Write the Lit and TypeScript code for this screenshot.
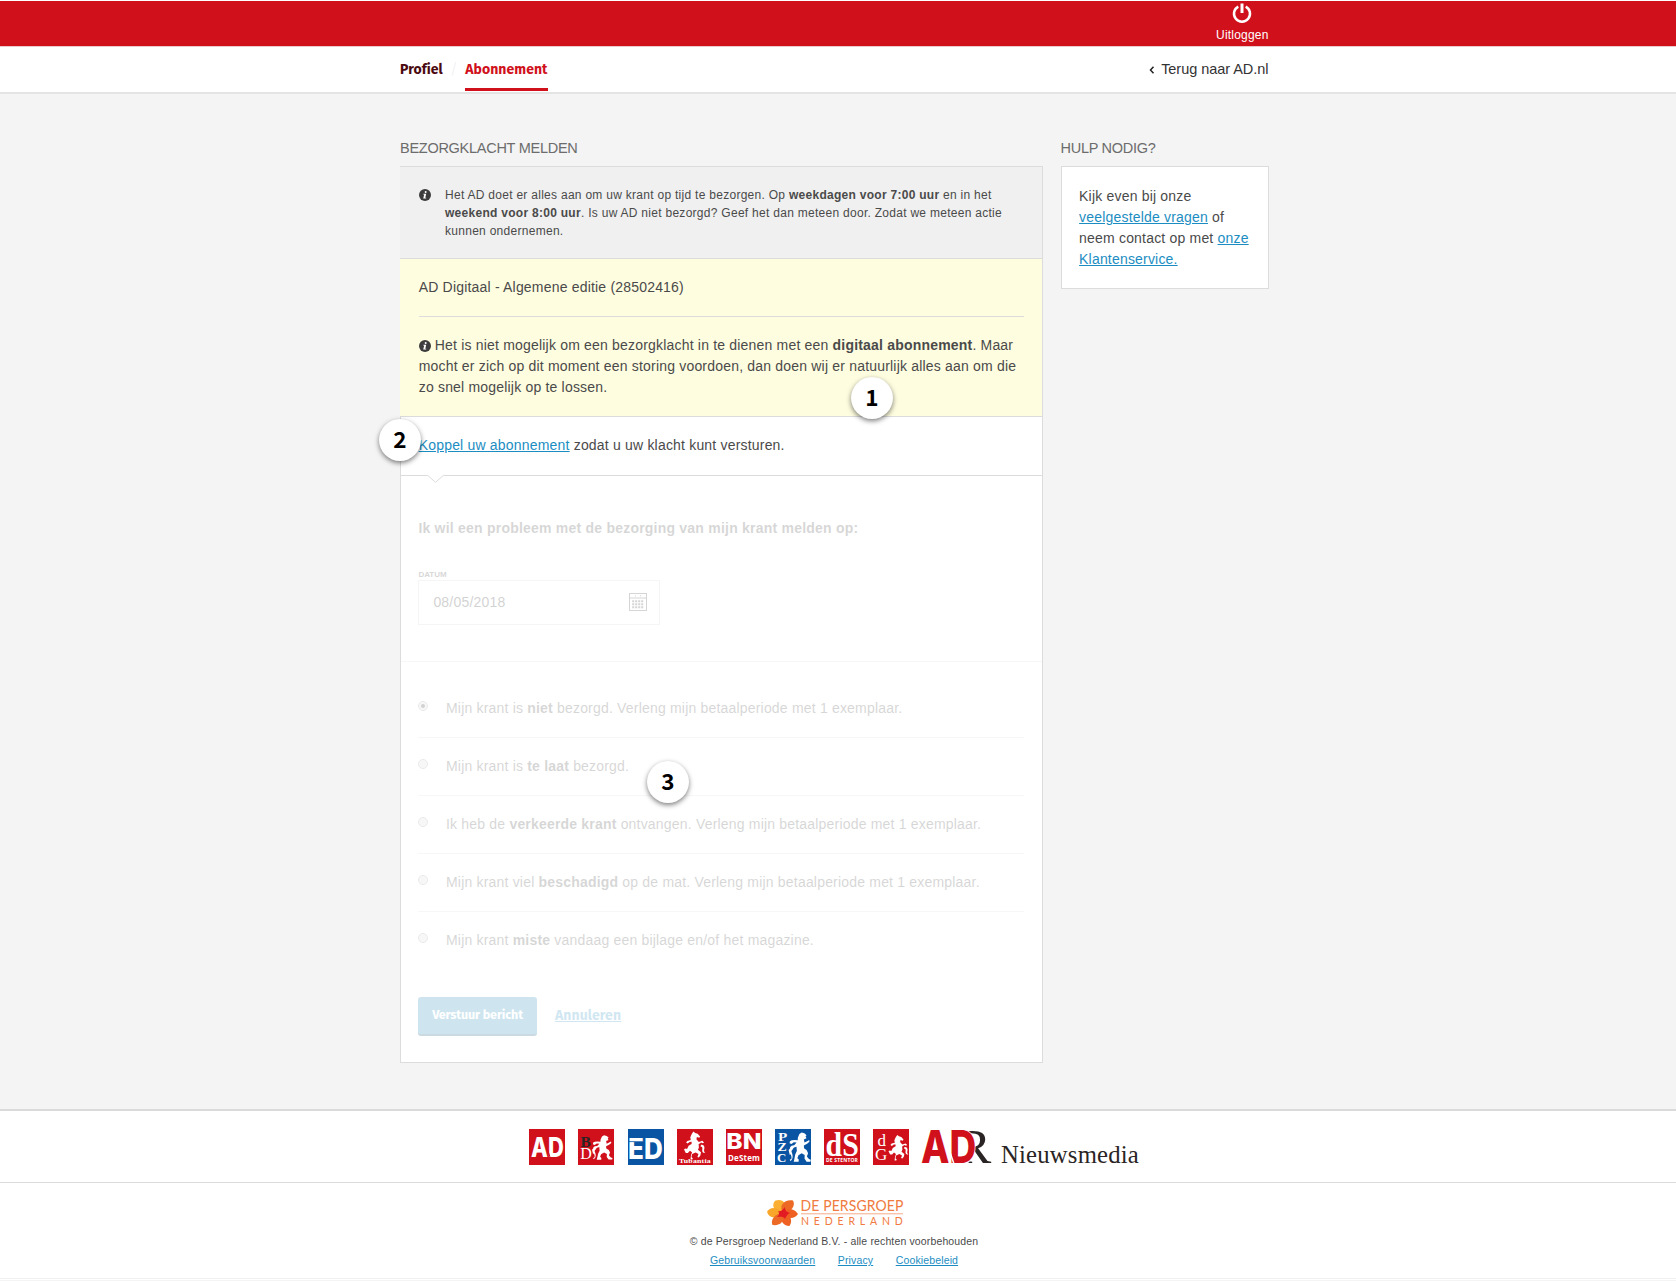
import { LitElement, html, svg, css } from 'lit';
import { customElement, state } from 'lit/decorators.js';

const lion = svg`
  <path d="M11.5 1.2 13.5 0l2.6.6 2 1.6-.9.9.8 1.7-2.4 1 .6 2.6 2.9-1.4 1.4-.8.3 1.6-2.2 1.6-3 1.5.2 2.2 2.5 1.6 1.2 2.6-1.1 2.6 1.9 2.2 1.7.6-.3 1.6h-3.6l-1.9-2.6.2-3-2.8-1.4-3 1.6-1 2.5 1.3 1.2-.2 1.8H6.2l.5-1.6.9-4.4 1.5-3-.3-3.6-2.3.7-1.8 1.9-1.6-.4-.3-1.7 1.5-1.3 2.4-.4 2.2-2.2-2.6-.3-2.2 1.5-1.7-.7.3-1.7 1.7-.8 2.700-.1 2.800.2.2-2.400z"/>
  <path d="M2.600 22.600c2.600.1 1.500-3 .6-4.800-.9-2-.1-3.900 1.300-4.700-.5 1.500-.6 2.500.1 4 .9 2.200 1.200 5.600-1.700 6.700z"/>
  <path d="M1.500 14.500 4 12l1.500 1.500L3.500 16l1 2-2 .5z"/>`;

const horse = svg`
  <path d="M9 0l1.600 1.300L13 2l2.300 2.600-.8 1.200-2.200-.6-.5 2 2.300 2.600 3.300-1.200 1.700 1.500-1.300.8-1.500-.6-2.400 1.500.3 3-.9 2.200 2.900 2.300-.6 3-1.500 1.700-1.300-.5 1-2.700-2.700-1.300-3.300 1.400-.7 2.800 1.300 1.300-.5 1H6.200l.4-3.500 1-3.200-2-1.500-1.900 2-2 .1L0 16.600l1.300-.8 1.600.5 1.500-3 2.800-1.700.1-2-2 .2-1.800 1.300-1.500-.8 1.200-1.600 3.200-.8L6 5.400l1.500-3.300z"/>
  <path d="M16.300 12.300c2.400-.3 3.700 1.700 3 4-.5 1.700-.2 2.600 1 3.300-2 .7-3.300-.7-2.900-2.800.4-1.900-.1-3-1.700-3z"/>`;

const infoIcon = html`
  <svg class="info-icon" viewBox="0 0 12 12" aria-hidden="true">
    <circle cx="6" cy="6" r="6" />
    <circle class="cut" cx="6.700" cy="2.900" r="1" />
    <path class="cut" d="M4.300 4.700h2.900L6.300 8.700h.9v.8H4.200l1-4H4.300z" />
  </svg>`;

const options = [
  ['Mijn krant is ', 'niet', ' bezorgd. Verleng mijn betaalperiode met 1 exemplaar.'],
  ['Mijn krant is ', 'te laat', ' bezorgd.'],
  ['Ik heb de ', 'verkeerde krant', ' ontvangen. Verleng mijn betaalperiode met 1 exemplaar.'],
  ['Mijn krant viel ', 'beschadigd', ' op de mat. Verleng mijn betaalperiode met 1 exemplaar.'],
  ['Mijn krant ', 'miste', ' vandaag een bijlage en/of het magazine.'],
];

@customElement('brand-logos')
class BrandLogos extends LitElement {
  static styles = css`
    :host { display: flex; align-items: flex-start; }
    svg { display: block; flex: none; overflow: visible; }
    .tile { width: 36px; height: 36px; margin-right: 13.100px; }
    .red { fill: #d0111c; }
    .blue { fill: #0a55a3; }
    .w { fill: #fff; }
    .k { fill: #2a2424; }
    .heavy { font-family: Inter, "Liberation Sans", sans-serif; font-weight: 800; }
    .sans { font-family: "Open Sans", sans-serif; font-weight: 700; }
    .serif { font-family: "Liberation Serif", serif; }
    .bold { font-weight: 700; }
    .halo { stroke: #fff; stroke-width: 1.500; paint-order: stroke; }
    .cutline { stroke: #d0111c; stroke-width: 1; }
    .adr { width: 72px; height: 36px; margin-left: 0; }
    .adr .cutline { stroke: #fff; stroke-width: 1.500; }
    .media { width: 140px; height: 40px; margin-left: 6px; }
  `;
  render() {
    return html`
      <svg class="tile" viewBox="0 0 36 36"><rect class="red" width="36" height="36"/>
        <text class="w heavy" x="2" y="27.700" font-size="26.500" textLength="33" lengthAdjust="spacingAndGlyphs">AD</text>
        <path class="cutline" d="M14.500 8 21 28"/></svg>
      <svg class="tile" viewBox="0 0 36 36"><rect class="red" width="36" height="36"/>
        <text class="k serif bold" x="2.500" y="18" font-size="15.500">B</text>
        <text class="w serif" x="2.200" y="30" font-size="16">D</text>
        <g class="w" transform="translate(12.500 6.300)">${lion}</g></svg>
      <svg class="tile" viewBox="0 0 36 36"><rect class="blue" width="36" height="36"/>
        <text class="w heavy" x="0" y="29.500" font-size="28.500" textLength="35" lengthAdjust="spacingAndGlyphs">ED</text>
        <path d="M1 12.600h14" stroke="#0a55a3" stroke-width=".8"/></svg>
      <svg class="tile" viewBox="0 0 36 36"><rect class="red" width="36" height="36"/>
        <g class="w" transform="translate(7 2.500) scale(1.050 1.080)">${horse}</g>
        <text class="w serif bold" x="2" y="33.700" font-size="7" textLength="32" lengthAdjust="spacingAndGlyphs">Tubantia</text></svg>
      <svg class="tile" viewBox="0 0 36 36"><rect class="red" width="36" height="36"/>
        <text class="w heavy" x=".3" y="20.300" font-size="21.500" textLength="35.500" lengthAdjust="spacingAndGlyphs">BN</text>
        <text class="w sans" x="2" y="31.800" font-size="8.700" textLength="32" lengthAdjust="spacingAndGlyphs">DeStem</text></svg>
      <svg class="tile" viewBox="0 0 36 36"><rect class="blue" width="36" height="36"/>
        <text class="w serif bold" x="3" y="11.500" font-size="12" textLength="9.500" lengthAdjust="spacingAndGlyphs">P</text>
        <text class="w serif bold" x="2.500" y="22.300" font-size="12" textLength="9.500" lengthAdjust="spacingAndGlyphs">Z</text>
        <text class="w serif bold" x="2" y="33.300" font-size="12" textLength="9.500" lengthAdjust="spacingAndGlyphs">C</text>
        <g class="w" transform="translate(12 3.500) scale(1.080 1.200)">${lion}</g></svg>
      <svg class="tile" viewBox="0 0 36 36"><rect class="red" width="36" height="36"/>
        <text class="w serif bold" x="1.500" y="26.500" font-size="33" textLength="33.500" lengthAdjust="spacingAndGlyphs">dS</text>
        <text class="w sans" x="2" y="33" font-size="5.500" textLength="32" lengthAdjust="spacingAndGlyphs">DE STENTOR</text></svg>
      <svg class="tile" viewBox="0 0 36 36"><rect class="red" width="36" height="36"/>
        <text class="w serif" x="4.500" y="17" font-size="17">d</text>
        <text class="w serif" x="2" y="31.300" font-size="17">G</text>
        <g class="w" transform="translate(15.500 6) scale(.98)">${horse}</g></svg>
      <svg class="adr" viewBox="0 0 72 36">
        <text class="k serif" x="34" y="34.300" font-size="49" textLength="35.500" lengthAdjust="spacingAndGlyphs">R</text>
        <path class="w" d="M30 0H43Q50 4 50 18T45 35H30z"/>
        <text class="red heavy halo" x="-1" y="34.300" font-size="45" textLength="55.500" lengthAdjust="spacingAndGlyphs">AD</text>
        <path class="cutline" d="M20.500 1 32 35"/></svg>
      <svg class="media" viewBox="0 0 140 40">
        <text class="k serif" x="1" y="34.400" font-size="25" textLength="138" lengthAdjust="spacingAndGlyphs">Nieuwsmedia</text></svg>`;
  }
}

@customElement('app-root')
class AppRoot extends LitElement {
  @state() private selected = 0;

  static styles = css`
    :host {
      display: block; position: relative; height: 1281px; box-sizing: border-box; overflow: hidden;
      background: #f4f4f4; color: #4a4a4a;
      font: 14px/21px "Liberation Sans", Arial, sans-serif; letter-spacing: .191px;
    }
    * { box-sizing: border-box; }
    p, h1, h2 { margin: 0; font: inherit; }
    a { color: #1c8dc2; text-decoration: underline; text-underline-offset: 1px; }
    .wrap { width: 868.500px; margin: 0 auto 0 400px; display: flex; justify-content: space-between; }
    .topbar { height: 46px; background: #d0111c; border-top: 1px solid #fff; }
    .topbar .wrap { justify-content: flex-end; }
    .logout { display: flex; flex-direction: column; align-items: center; color: #fff; font-size: 12px; line-height: 14px; padding-top: 2px; gap: 5px; }
    .logout svg { width: 20px; height: 20px; }
    nav { height: 48px; background: #fff; border-top: 1px solid #ecc9cb; border-bottom: 2px solid #e4e4e4; }
    .tabs { display: flex; font: bold 14px/21px "Fira Sans", Roboto, sans-serif; letter-spacing: .060px; height: 44px; }
    .tab { padding-top: 12px; color: #4a0a10; text-decoration: none; }
    .tab.on { color: #d0111c; border-bottom: 3px solid #d0111c; }
    .slash { width: 22.500px; padding-top: 12px; text-align: center; color: #eee; font-weight: 300; }
    .back { display: flex; align-items: center; gap: 6px; height: 45px; font-size: 14.500px; letter-spacing: -.040px; color: #333; text-decoration: none; }
    .back svg { width: 6px; height: 8px; margin-top: 1px; }
    .cols { padding-top: 44px; align-items: flex-start; }
    h1, h2 { font-size: 14.500px; line-height: 21px; letter-spacing: -.270px; color: #6c6c6c; padding-bottom: 7px; }
    .main { width: 643px; }
    .side { width: 208px; }
    .panel { border: 1px solid #dcdcdc; background: #fff; height: 897px; }
    .intro { display: flex; gap: 14px; height: 92px; padding: 19px 20px 0 19px; margin-left: -1px; background: #f0f0f0; border-bottom: 1px solid #dcdcdc; font-size: 12px; line-height: 18px; letter-spacing: .280px; }
    .intro p { width: 565px; }
    .info-icon { width: 12px; height: 12px; flex: none; fill: #3d3d3d; }
    .info-icon .cut { fill: #fff; }
    .intro .info-icon { margin-top: 3px; }
    .notice { height: 158px; margin-left: -1px; padding: 18px 18px 0 18.700px; background: #fefde0; border-bottom: 1px solid #dcdcdc; }
    .notice .sub { height: 40px; border-bottom: 1px solid #dcdcdc; }
    .notice .text { padding-top: 18px; white-space: nowrap; }
    .notice .info-icon { vertical-align: -2px; }
    .link { position: relative; height: 59px; padding: 18px 17.700px; border-bottom: 1px solid #dcdcdc; }
    .notch { position: absolute; left: 26px; top: 57px; width: 17px; height: 9px; }
    .form { opacity: .2; color: #3a3a3a; }
    .date { height: 186px; padding: 42px 17.400px 0; border-bottom: 1px solid #d8d8d8; }
    .date h2 { font: bold 14px/21px "Liberation Sans", Arial, sans-serif; letter-spacing: .220px; color: inherit; padding: 0; }
    .label { display: block; font-weight: bold; font-size: 8px; line-height: 10px; letter-spacing: 0; margin-top: 31px; }
    .field { display: flex; align-items: center; justify-content: space-between; width: 242px; height: 45px; padding: 0 12px 1px 14px; border: 1px solid #d0d0d0; color: #222; }
    .field svg { width: 18px; height: 18px; margin-top: -1px; }
    .opts { padding: 18px 18px 0 17px; }
    .opt { display: flex; height: 57.950px; padding-top: 18px; border-bottom: 1px solid #d8d8d8; }
    .opt:last-child { border-bottom: 0; }
    .radio { width: 10px; height: 10px; margin: 3px 18px 0 0; border: 1px solid #999; border-radius: 50%; background: #dcdcdc; flex: none; display: grid; place-items: center; }
    .radio.on::after { content: ""; width: 4px; height: 4px; border-radius: 50%; background: #222; }
    .actions { display: flex; align-items: flex-start; gap: 18px; padding: 27px 17px 0; font-family: "Fira Sans", Roboto, sans-serif; font-weight: bold; }
    .send { width: 119px; height: 39px; border: 0; border-bottom: 2px solid #00456e; border-radius: 3px; background: #0e80b5; color: #fff; font: bold 12.500px/18px "Fira Sans", Roboto, sans-serif; letter-spacing: -.120px; padding: 0; }
    .cancel { line-height: 20px; margin-top: 9px; letter-spacing: .090px; }
    .help { border: 1px solid #dcdcdc; background: #fff; height: 123px; padding: 19px 17px 0 17.600px; letter-spacing: .190px; white-space: nowrap; }
    .badge { position: absolute; width: 42px; height: 42px; border-radius: 50%; background: #fff; box-shadow: 0 2px 5px rgba(0,0,0,.5); text-align: center; font: bold 22.500px/38px "Noto Sans CJK SC", sans-serif; color: #000; letter-spacing: 0; }
    .b1 { left: 851px; top: 377px; }
    .b2 { left: 379px; top: 419px; }
    .b3 { left: 647px; top: 761px; }
    footer { margin-top: 46px; background: #fff; border-top: 2px solid #dadada; height: 171px; }
    .brands { height: 72px; padding: 18px 0 0 529.400px; border-bottom: 1px solid #dcdcdc; }
    .legal { display: flex; flex-direction: column; align-items: center; width: 288px; margin-left: 690px; height: 95px; font-size: 10.500px; line-height: 16px; letter-spacing: .140px; white-space: nowrap; }
    .legal svg { width: 137px; height: 30px; margin-top: 15px; overflow: visible; }
    .legal p { margin-top: 5px; }
    .links { display: flex; gap: 22.500px; margin-top: 3px; }
    .end { height: 1px; background: #f0f0f0; }
    .petal-name { font-family: Lato, sans-serif; font-weight: 400; fill: #f07a40; }
  `;

  render() {
    return html`
      <header class="topbar"><div class="wrap"><div class="logout">
        <svg viewBox="0 0 20 20" fill="none" stroke="#fff" stroke-width="2.500"><path d="M6.300 3.600a8 8 0 1 0 7.400 0"/><path d="M10 .5v9.500" stroke-width="3"/></svg>
        <span>Uitloggen</span></div></div></header>
      <nav><div class="wrap">
        <div class="tabs"><a class="tab">Profiel</a><span class="slash">/</span><a class="tab on">Abonnement</a></div>
        <a class="back"><svg viewBox="0 0 6 8" fill="none" stroke="#222" stroke-width="1.500"><path d="M4.500.8 1.500 4l3 3.200"/></svg>Terug naar AD.nl</a>
      </div></nav>
      <div class="wrap cols">
        <main class="main">
          <h1>BEZORGKLACHT MELDEN</h1>
          <div class="panel">
            <div class="intro">${infoIcon}<p>Het AD doet er alles aan om uw krant op tijd te bezorgen. Op <b>weekdagen voor 7:00 uur</b> en in het<br><b>weekend voor 8:00 uur</b>. Is uw AD niet bezorgd? Geef het dan meteen door. Zodat we meteen actie<br>kunnen ondernemen.</p></div>
            <div class="notice">
              <p class="sub">AD Digitaal - Algemene editie (28502416)</p>
              <p class="text">${infoIcon} Het is niet mogelijk om een bezorgklacht in te dienen met een <b>digitaal abonnement</b>. Maar<br>mocht er zich op dit moment een storing voordoen, dan doen wij er natuurlijk alles aan om die<br>zo snel mogelijk op te lossen.</p>
            </div>
            <div class="link"><a>Koppel uw abonnement</a> zodat u uw klacht kunt versturen.
              <svg class="notch" viewBox="0 0 17 9"><path d="M0 0H17V1.500H16L8.500 8.500 1 1.500H0z" fill="#fff"/><path d="M.5 1.300 8.500 8.300 16.500 1.300" fill="none" stroke="#dcdcdc"/></svg>
            </div>
            <div class="form">
              <div class="date">
                <h2>Ik wil een probleem met de bezorging van mijn krant melden op:</h2>
                <span class="label">DATUM</span>
                <div class="field">08/05/2018
                  <svg viewBox="0 0 18 18" fill="none" stroke="#333"><rect x=".5" y=".5" width="17" height="17"/><path d="M.5 5h17M6 2.800h1M11 2.800h1"/>
                  ${[8.2, 11.2, 14.2].map(y => svg`<path d=${`M3.200 ${y}h2m1-0h2m1 0h2m1 0h2`} stroke-width="2"/>`)}</svg>
                </div>
              </div>
              <div class="opts">${options.map((o, i) => html`
                <div class="opt" @click=${() => (this.selected = i)}><span class="radio ${i === this.selected ? 'on' : ''}"></span><span>${o[0]}<b>${o[1]}</b>${o[2]}</span></div>`)}
              </div>
              <div class="actions"><button class="send">Verstuur bericht</button><a class="cancel">Annuleren</a></div>
            </div>
          </div>
        </main>
        <aside class="side">
          <h2>HULP NODIG?</h2>
          <div class="help">Kijk even bij onze<br><a>veelgestelde vragen</a> of<br>neem contact op met <a>onze<br>Klantenservice.</a></div>
        </aside>
      </div>
      <footer>
        <div class="brands"><brand-logos></brand-logos></div>
        <div class="legal">
          <svg viewBox="0 0 137 30">
            <g transform="translate(17 15)">
              <path d="M0 0C-10-1-12-9-7.500-12.500 0-15 6-9 0 0z" fill="#fbb034"/>
              <path d="M0 0C-6 6-14 6-16-1-13-7-5-6 0 0z" fill="#f9a72b"/>
              <path d="M0 0C-5-8 2-14 10-12.500 13-7 8-1 0 0z" fill="#ec6a25"/>
              <path d="M0 0C3-6 11-5 15 1 11 7 3 6 0 0z" fill="#ee6123"/>
              <path d="M0 0C8 1 10 8 6.500 13 0 13-4 7 0 0z" fill="#ee6123"/>
              <path d="M0 0C3 8-3 13-10.500 12-13 7-8 0 0 0z" fill="#ec6a25"/>
              <path d="M-5-2C-1-1 0-4 2-6 2-2 4-1 7 0 4 1 3 4 2 6 0 3-3 4-6 4-4 2-3 1-5-2z" fill="#e31b23"/>
            </g>
            <text class="petal-name" x="34.500" y="12.800" font-size="16" textLength="103" lengthAdjust="spacingAndGlyphs">DE PERSGROEP</text>
            <path d="M35 15.800h102" stroke="#f3976a" stroke-width=".8"/>
            <text class="petal-name" x="35" y="26.800" font-size="10.500" textLength="102">NEDERLAND</text>
          </svg>
          <p>© de Persgroep Nederland B.V. - alle rechten voorbehouden</p>
          <div class="links"><a>Gebruiksvoorwaarden</a><a>Privacy</a><a>Cookiebeleid</a></div>
        </div>
        <div class="end"></div>
      </footer>
      <span class="badge b1">1</span><span class="badge b2">2</span><span class="badge b3">3</span>`;
  }
}
